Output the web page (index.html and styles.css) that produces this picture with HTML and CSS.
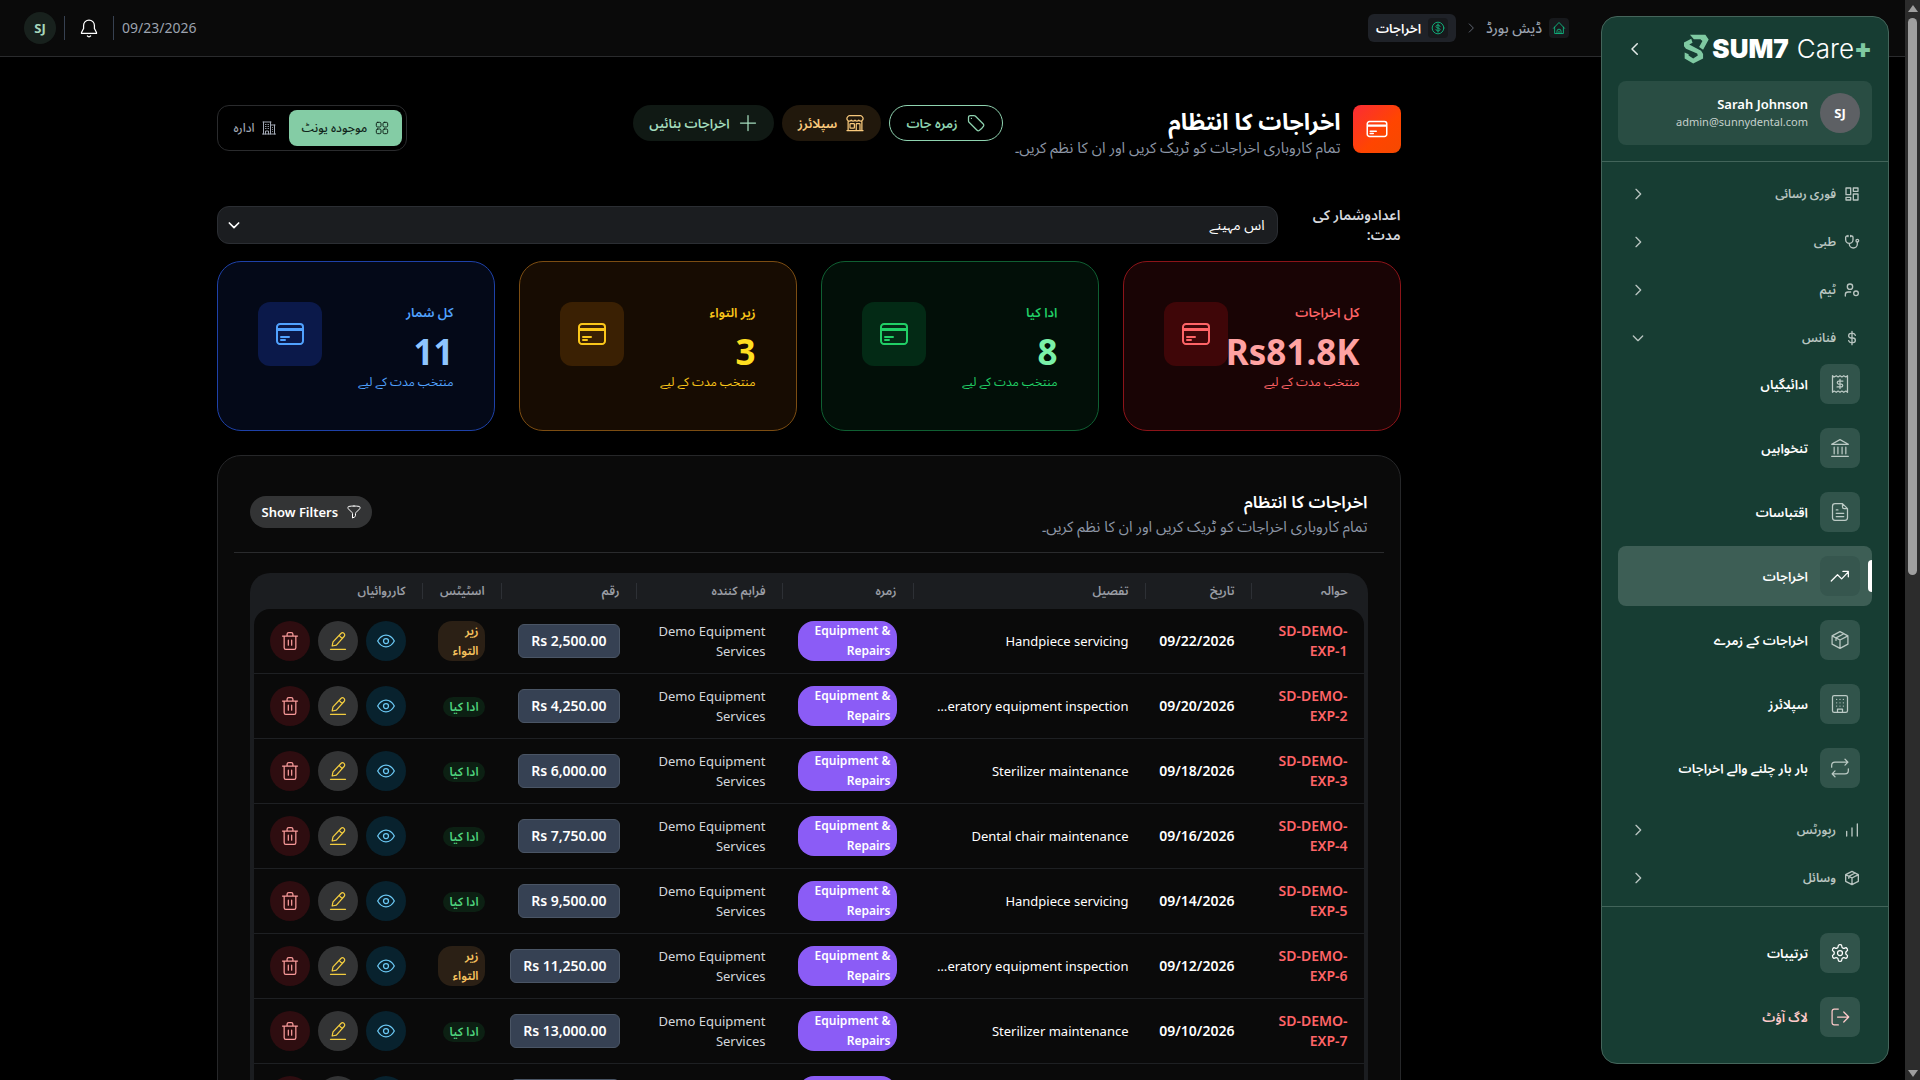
FILE: index.html
```html
<!DOCTYPE html>
<html lang="ur" dir="rtl">
<head>
    <meta charset="UTF-8">
    <meta name="viewport" content="width=device-width, initial-scale=1.0">
    <title>اخراجات کا انتظام</title>
    <link rel="stylesheet" href="styles.css">
</head>
<body>

    <!-- icon sprite -->
    <svg class="sprite" aria-hidden="true">
        <symbol id="i-card" viewBox="0 0 24 24"><path d="M2.25 8.25h19.5M2.25 9h19.5m-16.5 5.25h6m-6 2.25h3m-3.75 3h15a2.25 2.25 0 0 0 2.25-2.25V6.75A2.25 2.25 0 0 0 19.5 4.5h-15a2.25 2.25 0 0 0-2.25 2.25v10.5A2.25 2.25 0 0 0 4.5 19.5Z"/></symbol>
        <symbol id="i-home" viewBox="0 0 24 24"><path d="M2.5 12.5 12 2.5l9.5 10M4.5 10.5V21.5h15V10.5M8.5 21.5v-4a3.5 3.5 0 0 1 7 0v4M12 17.5v4"/></symbol>
        <symbol id="i-coin" viewBox="0 0 24 24"><circle cx="12" cy="12" r="10"/><path d="M15.500 9.500c0-1.400-1.500-2.500-3.500-2.500s-3.500 1-3.500 2.500 1.500 2.200 3.500 2.500 3.500 1 3.500 2.500-1.500 2.500-3.500 2.500-3.500-1.100-3.500-2.500M12 5v14"/></symbol>
        <symbol id="i-right" viewBox="0 0 24 24"><path d="m9 5 7 7-7 7"/></symbol>
        <symbol id="i-left" viewBox="0 0 24 24"><path d="m15 5-7 7 7 7"/></symbol>
        <symbol id="i-down" viewBox="0 0 24 24"><path d="m5 9 7 7 7-7"/></symbol>
        <symbol id="i-bell" viewBox="0 0 24 24"><path d="M12 2.500a6.500 6.500 0 0 0-6.500 6.500v3.500L3 17.500v1h18v-1l-2.500-5V9A6.500 6.500 0 0 0 12 2.500ZM10 21.500a2.500 2.500 0 0 0 4 0"/></symbol>
        <symbol id="i-tag" viewBox="0 0 24 24"><path d="M9.568 3H5.250A2.250 2.250 0 0 0 3 5.250v4.318c0 .597.237 1.170.659 1.591l9.581 9.581c.699.699 1.780.872 2.607.330a18.095 18.095 0 0 0 5.223-5.223c.542-.827.369-1.908-.330-2.607L11.160 3.660A2.250 2.250 0 0 0 9.568 3ZM6.500 6.500h.01"/></symbol>
        <symbol id="i-store" viewBox="0 0 24 24"><path d="M13.5 21v-7.5a.75.75 0 0 1 .75-.75h3a.75.75 0 0 1 .75.75V21m-4.5 0H2.36m11.14 0H18m0 0h3.64m-1.39 0V9.349M3.75 21V9.349m0 0a3.001 3.001 0 0 0 3.75-.615A2.993 2.993 0 0 0 9.75 9.75c.896 0 1.7-.393 2.25-1.016a2.993 2.993 0 0 0 2.25 1.016c.896 0 1.7-.393 2.25-1.015a3.001 3.001 0 0 0 3.75.614m-16.5 0a3.004 3.004 0 0 1-.621-4.72l1.189-1.19A1.5 1.5 0 0 1 5.378 3h13.243a1.5 1.5 0 0 1 1.06.44l1.19 1.189a3 3 0 0 1-.621 4.72M6.75 18h3.75a.75.75 0 0 0 .75-.75V13.5a.75.75 0 0 0-.75-.75H6.75a.75.75 0 0 0-.75.75v3.75c0 .414.336.75.75.75Z"/></symbol>
        <symbol id="i-plus" viewBox="0 0 24 24"><path d="M12 3v18M3 12h18"/></symbol>
        <symbol id="i-grid" viewBox="0 0 24 24"><rect x="3.5" y="3.5" width="7" height="7" rx="2"/><rect x="13.5" y="3.5" width="7" height="7" rx="2"/><rect x="3.5" y="13.5" width="7" height="7" rx="2"/><rect x="13.5" y="13.5" width="7" height="7" rx="2"/></symbol>
        <symbol id="i-office" viewBox="0 0 24 24"><path d="M2.25 21h19.5m-18-18v18m10.5-18v18m6-13.5V21M6.75 6.75h.75m-.75 3h.75m-.75 3h.75m3-6h.75m-.75 3h.75m-.75 3h.75M6.75 21v-4.500h4.500V21M3 3h12m-.75 4.5H21m-3.750 3.750h.01m-.01 3h.01m-.01 3h.01"/></symbol>
        <symbol id="i-funnel" viewBox="0 0 24 24"><path d="M12 3c2.755 0 5.455.232 8.083.678.533.09.917.556.917 1.096v1.044a2.25 2.25 0 0 1-.659 1.591l-5.432 5.432a2.25 2.25 0 0 0-.659 1.591v2.927a2.25 2.25 0 0 1-1.244 2.013L9.75 21v-6.568a2.25 2.25 0 0 0-.659-1.591L3.659 7.409A2.25 2.25 0 0 1 3 5.818V4.774c0-.54.384-1.006.917-1.096A48.32 48.32 0 0 1 12 3Z"/></symbol>
        <symbol id="i-eye" viewBox="0 0 24 24"><path d="M2 12c2.500-4.500 5.800-7 10-7s7.500 2.500 10 7c-2.500 4.500-5.800 7-10 7s-7.500-2.500-10-7Z"/><circle cx="12" cy="12" r="3"/></symbol>
        <symbol id="i-edit" viewBox="0 0 24 24"><path d="M3 22h18M5 18l1-5 9.500-10a2.600 2.600 0 0 1 3.800 3.600L10 17l-5 1ZM13.500 5.500l3.500 3.500"/></symbol>
        <symbol id="i-trash" viewBox="0 0 24 24"><path d="M3 6h18M5 6v14a2 2 0 0 0 2 2h10a2 2 0 0 0 2-2V6M8.500 6V4a2 2 0 0 1 2-2h3a2 2 0 0 1 2 2v2M10 11v6M14 11v6"/></symbol>
        <symbol id="i-dashboard" viewBox="0 0 24 24"><path d="M3 3h7v10H3ZM14 3h7v5h-7ZM14 12h7v9h-7ZM3 17h7v4H3Z"/></symbol>
        <symbol id="i-stetho" viewBox="0 0 24 24"><path d="M6 3H4.500a2 2 0 0 0-2 2v3.500a5.500 5.500 0 0 0 11 0V5a2 2 0 0 0-2-2H10M8 14v1a6 6 0 0 0 12 0v-3M6 2v2M10 2v2"/><circle cx="20" cy="10" r="2"/></symbol>
        <symbol id="i-team" viewBox="0 0 24 24"><circle cx="9" cy="7" r="4"/><path d="M2 21v-2a4 4 0 0 1 4-4h4"/><circle cx="18" cy="17" r="3.500"/></symbol>
        <symbol id="i-dollar" viewBox="0 0 24 24"><path d="M17 8a4 4 0 0 0-3.500-3h-3a3.500 3.500 0 0 0 0 7h3a3.500 3.500 0 0 1 0 7h-3A4 4 0 0 1 7 16M12 2v20"/></symbol>
        <symbol id="i-receipt" viewBox="0 0 24 24"><path d="M3 2v20l2-1.500L7.500 22l2.250-1.500L12 22l2.250-1.500L16.500 22l2.500-1.500 2 1.500V2l-2 1.500L16.500 2l-2.250 1.500L12 2 9.750 3.500 7.500 2 5 3.500ZM15.500 8.500h-5a1.750 1.750 0 0 0 0 3.500h3a1.750 1.750 0 0 1 0 3.500h-5M12 6.500v11"/></symbol>
        <symbol id="i-bank" viewBox="0 0 24 24"><path d="M2 22h20M2 7.500h20L12 2ZM5 11v8M9.500 11v8M14.500 11v8M19 11v8"/></symbol>
        <symbol id="i-file" viewBox="0 0 24 24"><path d="M15 2v4a2 2 0 0 0 2 2h4M18 22H6a3 3 0 0 1-3-3V5a3 3 0 0 1 3-3h9l6 6v11a3 3 0 0 1-3 3ZM7.500 9.500h2M7.500 13.500h9M7.500 17.500h9"/></symbol>
        <symbol id="i-trend" viewBox="0 0 24 24"><path d="m1.500 18 7.500-7.500 5 5L22 7M15.500 6.500H22V13"/></symbol>
        <symbol id="i-box" viewBox="0 0 24 24"><path d="m12 2 9.500 5v10L12 22l-9.500-5V7ZM12 12l9.500-5M12 12v10M12 12 2.500 7M16.700 4.500l-9.500 5v3"/></symbol>
        <symbol id="i-building" viewBox="0 0 24 24"><rect x="3" y="2" width="18" height="20" rx="2"/><path d="M9 22v-4h6v4M8 6.500h.01M12 6.500h.01M16 6.500h.01M8 10.500h.01M12 10.500h.01M16 10.500h.01M8 14.500h.01M12 14.500h.01M16 14.500h.01"/></symbol>
        <symbol id="i-repeat" viewBox="0 0 24 24"><path d="M2 11V9a4 4 0 0 1 4-4h15.500M18 1.500 21.500 5 18 8.500M22 13v2a4 4 0 0 1-4 4H2.500M6 22.500 2.500 19 6 15.500"/></symbol>
        <symbol id="i-bars" viewBox="0 0 24 24"><path d="M4 21v-7M12 21V9M20 21V3"/></symbol>
        <symbol id="i-gear" viewBox="0 0 24 24"><path d="M12.220 2h-.440a2 2 0 0 0-2 2v.180a2 2 0 0 1-1 1.730l-.430.250a2 2 0 0 1-2 0l-.150-.080a2 2 0 0 0-2.730.730l-.220.380a2 2 0 0 0 .730 2.730l.150.100a2 2 0 0 1 1 1.720v.510a2 2 0 0 1-1 1.740l-.150.090a2 2 0 0 0-.730 2.730l.220.380a2 2 0 0 0 2.730.730l.150-.080a2 2 0 0 1 2 0l.430.250a2 2 0 0 1 1 1.730V20a2 2 0 0 0 2 2h.440a2 2 0 0 0 2-2v-.180a2 2 0 0 1 1-1.730l.430-.250a2 2 0 0 1 2 0l.150.080a2 2 0 0 0 2.730-.730l.220-.390a2 2 0 0 0-.730-2.730l-.150-.080a2 2 0 0 1-1-1.740v-.500a2 2 0 0 1 1-1.740l.150-.090a2 2 0 0 0 .730-2.730l-.220-.380a2 2 0 0 0-2.730-.730l-.150.080a2 2 0 0 1-2 0l-.430-.250a2 2 0 0 1-1-1.730V4a2 2 0 0 0-2-2Z"/><circle cx="12" cy="12" r="3"/></symbol>
        <symbol id="i-logout" viewBox="0 0 24 24"><path d="M10 2.500H5a2.500 2.500 0 0 0-2.500 2.500v14A2.500 2.500 0 0 0 5 21.500h5M9 12h13M16.500 6l6 6-6 6"/></symbol>
    </svg>

    <header class="topbar">
        <nav class="crumbs">
            <a class="crumb" href="#"><span class="crumb-icon"><svg><use href="#i-home"/></svg></span>ڈیش بورڈ</a>
            <svg class="crumb-sep"><use href="#i-right"/></svg>
            <a class="crumb current" href="#"><span class="crumb-icon"><svg><use href="#i-coin"/></svg></span>اخراجات</a>
        </nav>
        <div class="topbar-end">
            <span class="date">09/23/2026</span>
            <button class="bell" aria-label="Notifications"><svg><use href="#i-bell"/></svg></button>
            <button class="user-chip">SJ</button>
        </div>
    </header>

    <aside class="sidebar">
        <div class="side-head">
            <div class="logo" dir="ltr">
                <svg class="logo-mark" viewBox="0 0 76 88"><path d="M18 1h47l10 14-17 31-12-8 10-18-6-6H30Z"/><path d="m0 24 22-11 4 12-10 5 36 19 6 10v14L28 88 2 73V55l12 5v4l14 9 14-9-2-6L6 43 0 36Z"/></svg>
                <span class="logo-bold">SUM7</span>
                <span class="logo-thin">Care</span><span class="logo-plus">+</span>
            </div>
            <button class="collapse" aria-label="Collapse"><svg><use href="#i-left"/></svg></button>
        </div>
        <div class="profile">
            <span class="avatar">SJ</span>
            <div>
                <div class="profile-name">Sarah Johnson</div>
                <div class="profile-mail">admin@sunnydental.com</div>
            </div>
        </div>

        <nav class="side-nav">
            <button class="group"><svg><use href="#i-dashboard"/></svg>فوری رسائی<svg class="arrow"><use href="#i-right"/></svg></button>
            <button class="group"><svg><use href="#i-stetho"/></svg>طبی<svg class="arrow"><use href="#i-right"/></svg></button>
            <button class="group"><svg><use href="#i-team"/></svg>ٹیم<svg class="arrow"><use href="#i-right"/></svg></button>
            <div class="group-open">
                <button class="group"><svg><use href="#i-dollar"/></svg>فنانس<svg class="arrow"><use href="#i-down"/></svg></button>
                <div class="items">
                    <a class="item" href="#"><span class="item-icon"><svg><use href="#i-receipt"/></svg></span>ادائیگیاں</a>
                    <a class="item" href="#"><span class="item-icon"><svg><use href="#i-bank"/></svg></span>تنخواہیں</a>
                    <a class="item" href="#"><span class="item-icon"><svg><use href="#i-file"/></svg></span>اقتباسات</a>
                    <a class="item active" href="#"><span class="item-icon"><svg><use href="#i-trend"/></svg></span>اخراجات</a>
                    <a class="item" href="#"><span class="item-icon"><svg><use href="#i-box"/></svg></span>اخراجات کے زمرے</a>
                    <a class="item" href="#"><span class="item-icon"><svg><use href="#i-building"/></svg></span>سپلائرز</a>
                    <a class="item" href="#"><span class="item-icon"><svg><use href="#i-repeat"/></svg></span>بار بار چلنے والے اخراجات</a>
                </div>
            </div>
            <button class="group"><svg><use href="#i-bars"/></svg>رپورٹس<svg class="arrow"><use href="#i-right"/></svg></button>
            <button class="group"><svg><use href="#i-box"/></svg>وسائل<svg class="arrow"><use href="#i-right"/></svg></button>
        </nav>

        <div class="side-foot items">
            <a class="item settings" href="#"><span class="item-icon"><svg><use href="#i-gear"/></svg></span>ترتیبات</a>
            <a class="item logout" href="#"><span class="item-icon"><svg><use href="#i-logout"/></svg></span>لاگ آؤٹ</a>
        </div>
    </aside>

    <main class="main">
        <div class="container">

            <div class="page-head">
                <span class="page-icon"><svg><use href="#i-card"/></svg></span>
                <div class="page-title">
                    <h1>اخراجات کا انتظام</h1>
                    <p>تمام کاروباری اخراجات کو ٹریک کریں اور ان کا نظم کریں۔</p>
                </div>
                <div class="actions">
                    <button class="pill outline"><svg><use href="#i-tag"/></svg>زمرہ جات</button>
                    <button class="pill amber"><svg><use href="#i-store"/></svg>سپلائرز</button>
                    <button class="pill green"><svg><use href="#i-plus"/></svg>اخراجات بنائیں</button>
                </div>
                <div class="switch">
                    <button class="on"><svg><use href="#i-grid"/></svg>موجودہ یونٹ</button>
                    <button><svg><use href="#i-office"/></svg>ادارہ</button>
                </div>
            </div>

            <div class="period">
                <label for="period">اعدادوشمار کی مدت:</label>
                <div class="select-wrap">
                    <select id="period"><option>اس مہینے</option></select>
                    <svg><use href="#i-down"/></svg>
                </div>
            </div>

            <div class="stats">
                <div class="stat red">
                    <div class="stat-text">
                        <div class="stat-label">کل اخراجات</div>
                        <div class="stat-value"><bdi>Rs81.8K</bdi></div>
                        <div class="stat-note">منتخب مدت کے لیے</div>
                    </div>
                    <span class="stat-icon"><svg><use href="#i-card"/></svg></span>
                </div>
                <div class="stat emerald">
                    <div class="stat-text">
                        <div class="stat-label">ادا کیا</div>
                        <div class="stat-value">8</div>
                        <div class="stat-note">منتخب مدت کے لیے</div>
                    </div>
                    <span class="stat-icon"><svg><use href="#i-card"/></svg></span>
                </div>
                <div class="stat yellow">
                    <div class="stat-text">
                        <div class="stat-label">زیر التواء</div>
                        <div class="stat-value">3</div>
                        <div class="stat-note">منتخب مدت کے لیے</div>
                    </div>
                    <span class="stat-icon"><svg><use href="#i-card"/></svg></span>
                </div>
                <div class="stat blue">
                    <div class="stat-text">
                        <div class="stat-label">کل شمار</div>
                        <div class="stat-value">11</div>
                        <div class="stat-note">منتخب مدت کے لیے</div>
                    </div>
                    <span class="stat-icon"><svg><use href="#i-card"/></svg></span>
                </div>
            </div>

            <section class="panel">
                <div class="panel-head">
                    <div>
                        <h2>اخراجات کا انتظام</h2>
                        <p>تمام کاروباری اخراجات کو ٹریک کریں اور ان کا نظم کریں۔</p>
                    </div>
                    <button class="filters"><svg><use href="#i-funnel"/></svg>Show Filters</button>
                </div>

                <div class="table-wrap">
                    <table>
                        <colgroup>
                            <col class="c-ref"><col class="c-date"><col><col class="c-cat"><col class="c-sup"><col class="c-amt"><col class="c-status"><col class="c-act">
                        </colgroup>
                        <thead>
                            <tr><th>حوالہ</th><th>تاریخ</th><th>تفصیل</th><th>زمرہ</th><th>فراہم کنندہ</th><th>رقم</th><th>اسٹیٹس</th><th>کارروائیاں</th></tr>
                        </thead>
                        <tbody>
                            <tr>
                                <td class="ref" dir="ltr">SD-DEMO-EXP-1</td><td class="day">09/22/2026</td><td><div class="desc">Handpiece servicing</div></td>
                                <td><span class="cat">Equipment &amp; Repairs</span></td><td class="sup">Demo Equipment Services</td><td><bdi class="amt">Rs 2,500.00</bdi></td>
                                <td><span class="status due">زیر التواء</span></td>
                                <td><div class="row-actions"><button class="view" aria-label="View"><svg><use href="#i-eye"/></svg></button><button class="edit" aria-label="Edit"><svg><use href="#i-edit"/></svg></button><button class="del" aria-label="Delete"><svg><use href="#i-trash"/></svg></button></div></td>
                            </tr>
                            <tr>
                                <td class="ref" dir="ltr">SD-DEMO-EXP-2</td><td class="day">09/20/2026</td><td><div class="desc">Operatory equipment inspection</div></td>
                                <td><span class="cat">Equipment &amp; Repairs</span></td><td class="sup">Demo Equipment Services</td><td><bdi class="amt">Rs 4,250.00</bdi></td>
                                <td><span class="status paid">ادا کیا</span></td>
                                <td><div class="row-actions"><button class="view" aria-label="View"><svg><use href="#i-eye"/></svg></button><button class="edit" aria-label="Edit"><svg><use href="#i-edit"/></svg></button><button class="del" aria-label="Delete"><svg><use href="#i-trash"/></svg></button></div></td>
                            </tr>
                            <tr>
                                <td class="ref" dir="ltr">SD-DEMO-EXP-3</td><td class="day">09/18/2026</td><td><div class="desc">Sterilizer maintenance</div></td>
                                <td><span class="cat">Equipment &amp; Repairs</span></td><td class="sup">Demo Equipment Services</td><td><bdi class="amt">Rs 6,000.00</bdi></td>
                                <td><span class="status paid">ادا کیا</span></td>
                                <td><div class="row-actions"><button class="view" aria-label="View"><svg><use href="#i-eye"/></svg></button><button class="edit" aria-label="Edit"><svg><use href="#i-edit"/></svg></button><button class="del" aria-label="Delete"><svg><use href="#i-trash"/></svg></button></div></td>
                            </tr>
                            <tr>
                                <td class="ref" dir="ltr">SD-DEMO-EXP-4</td><td class="day">09/16/2026</td><td><div class="desc">Dental chair maintenance</div></td>
                                <td><span class="cat">Equipment &amp; Repairs</span></td><td class="sup">Demo Equipment Services</td><td><bdi class="amt">Rs 7,750.00</bdi></td>
                                <td><span class="status paid">ادا کیا</span></td>
                                <td><div class="row-actions"><button class="view" aria-label="View"><svg><use href="#i-eye"/></svg></button><button class="edit" aria-label="Edit"><svg><use href="#i-edit"/></svg></button><button class="del" aria-label="Delete"><svg><use href="#i-trash"/></svg></button></div></td>
                            </tr>
                            <tr>
                                <td class="ref" dir="ltr">SD-DEMO-EXP-5</td><td class="day">09/14/2026</td><td><div class="desc">Handpiece servicing</div></td>
                                <td><span class="cat">Equipment &amp; Repairs</span></td><td class="sup">Demo Equipment Services</td><td><bdi class="amt">Rs 9,500.00</bdi></td>
                                <td><span class="status paid">ادا کیا</span></td>
                                <td><div class="row-actions"><button class="view" aria-label="View"><svg><use href="#i-eye"/></svg></button><button class="edit" aria-label="Edit"><svg><use href="#i-edit"/></svg></button><button class="del" aria-label="Delete"><svg><use href="#i-trash"/></svg></button></div></td>
                            </tr>
                            <tr>
                                <td class="ref" dir="ltr">SD-DEMO-EXP-6</td><td class="day">09/12/2026</td><td><div class="desc">Operatory equipment inspection</div></td>
                                <td><span class="cat">Equipment &amp; Repairs</span></td><td class="sup">Demo Equipment Services</td><td><bdi class="amt">Rs 11,250.00</bdi></td>
                                <td><span class="status due">زیر التواء</span></td>
                                <td><div class="row-actions"><button class="view" aria-label="View"><svg><use href="#i-eye"/></svg></button><button class="edit" aria-label="Edit"><svg><use href="#i-edit"/></svg></button><button class="del" aria-label="Delete"><svg><use href="#i-trash"/></svg></button></div></td>
                            </tr>
                            <tr>
                                <td class="ref" dir="ltr">SD-DEMO-EXP-7</td><td class="day">09/10/2026</td><td><div class="desc">Sterilizer maintenance</div></td>
                                <td><span class="cat">Equipment &amp; Repairs</span></td><td class="sup">Demo Equipment Services</td><td><bdi class="amt">Rs 13,000.00</bdi></td>
                                <td><span class="status paid">ادا کیا</span></td>
                                <td><div class="row-actions"><button class="view" aria-label="View"><svg><use href="#i-eye"/></svg></button><button class="edit" aria-label="Edit"><svg><use href="#i-edit"/></svg></button><button class="del" aria-label="Delete"><svg><use href="#i-trash"/></svg></button></div></td>
                            </tr>
                            <tr>
                                <td class="ref" dir="ltr">SD-DEMO-EXP-8</td><td class="day">09/08/2026</td><td><div class="desc">Dental chair maintenance</div></td>
                                <td><span class="cat">Equipment &amp; Repairs</span></td><td class="sup">Demo Equipment Services</td><td><bdi class="amt">Rs 14,750.00</bdi></td>
                                <td><span class="status paid">ادا کیا</span></td>
                                <td><div class="row-actions"><button class="view" aria-label="View"><svg><use href="#i-eye"/></svg></button><button class="edit" aria-label="Edit"><svg><use href="#i-edit"/></svg></button><button class="del" aria-label="Delete"><svg><use href="#i-trash"/></svg></button></div></td>
                            </tr>
                        </tbody>
                    </table>
                </div>
            </section>

        </div>
    </main>

    <div class="scrollbar" aria-hidden="true"><i class="up"></i><i class="thumb"></i><i class="dn"></i></div>

</body>
</html>
```
FILE: styles.css
```css
* {
    box-sizing: border-box;
}
html {
    background: #000;
    scrollbar-width: none;
}
body {
    margin: 0;
    padding-right: 15px;
    background: #000;
    color: #fff;
    font-family: "Noto Sans", "Noto Sans Arabic", "DejaVu Sans", sans-serif;
    font-size: 14px;
    line-height: 20px;
}
h1, h2, p {
    margin: 0;
}
a {
    color: inherit;
    text-decoration: none;
}
button, select {
    margin: 0;
    padding: 0;
    border: 0;
    background: none;
    color: inherit;
    font: inherit;
    cursor: pointer;
}
svg {
    flex: none;
    width: 20px;
    height: 20px;
    fill: none;
    stroke: currentColor;
    stroke-width: 1.5;
    stroke-linecap: round;
    stroke-linejoin: round;
}
.sprite {
    display: none;
}

/* top bar */
.topbar {
    display: flex;
    align-items: center;
    justify-content: space-between;
    height: 57px;
    padding: 0 336px 0 24px;
    background: #0a0a0a;
    border-bottom: 1px solid #2a2b2d;
}
.crumbs, .crumb, .topbar-end {
    display: flex;
    align-items: center;
}
.crumbs {
    gap: 8px;
}
.crumb {
    gap: 7px;
    color: #9ca3af;
    font-weight: 500;
}
.crumb-icon {
    display: grid;
    place-items: center;
    width: 20px;
    height: 20px;
    border-radius: 4px;
    background: #17191c;
    color: #10b981;
}
.crumb-icon svg {
    width: 14px;
    height: 14px;
}
.crumb-sep {
    width: 14px;
    height: 14px;
    color: #6b7280;
}
.crumb.current {
    padding: 4px 8px;
    border-radius: 6px;
    background: #1f2228;
    color: #fff;
    font-size: 13px;
    font-weight: 600;
}
.date {
    color: #9ca3af;
}
.bell {
    display: grid;
    place-items: center;
    width: 50px;
    height: 24px;
    margin-right: 8px;
    border: solid #374151;
    border-width: 0 1px;
}
.user-chip {
    width: 32px;
    height: 32px;
    margin-right: 8px;
    border-radius: 50%;
    background: #18211d;
    color: #a7d8bd;
    font-size: 13px;
    font-weight: 700;
}

/* sidebar */
.sidebar {
    position: fixed;
    top: 16px;
    right: 31px;
    bottom: 16px;
    width: 288px;
    overflow: hidden;
    border: 1px solid #45655b;
    border-radius: 16px;
    background: #173d33;
}
.side-head {
    display: flex;
    align-items: center;
    justify-content: space-between;
    height: 64px;
    padding: 0 16px 0 24px;
}
.logo {
    display: flex;
    align-items: center;
    font-family: Inter, sans-serif;
    font-size: 26px;
    line-height: 32px;
}
.logo-mark {
    width: 25px;
    height: 30px;
    margin-right: 3px;
    fill: #7fcaa2;
    stroke: none;
}
.logo-bold {
    margin-right: 8px;
    font-weight: 900;
}
.logo-thin {
    font-weight: 300;
}
.logo-plus {
    color: #7fcaa2;
    font-weight: 900;
}
.collapse {
    display: grid;
    color: #e3ebe8;
}
.collapse svg {
    stroke-width: 2;
    width: 18px;
    height: 18px;
}
.profile {
    display: flex;
    align-items: center;
    gap: 12px;
    height: 64px;
    margin: 0 16px 16px;
    padding: 0 12px;
    border-radius: 8px;
    background: #294d43;
}
.avatar {
    display: grid;
    place-items: center;
    width: 40px;
    height: 40px;
    border-radius: 50%;
    background: #5d6064;
    font-size: 13px;
    font-weight: 700;
}
.profile-name {
    font-size: 13px;
    line-height: 18px;
    font-weight: 600;
}
.profile-mail {
    color: #c5d0cc;
    font-size: 11px;
    line-height: 18px;
}
.side-nav {
    display: flex;
    flex-direction: column;
    gap: 16px;
    padding: 16px 16px 12px;
    border-top: 1px solid #42645a;
}
.group {
    display: flex;
    align-items: center;
    gap: 8px;
    width: 100%;
    height: 32px;
    padding: 0 12px;
    color: #b9c5c1;
    font-size: 12px;
    font-weight: 600;
}
.group svg {
    width: 16px;
    height: 16px;
    stroke-width: 2;
}
.group .arrow {
    margin-right: auto;
}
.items {
    display: flex;
    flex-direction: column;
    gap: 4px;
}
.item {
    position: relative;
    display: flex;
    align-items: center;
    gap: 12px;
    height: 60px;
    padding: 0 12px;
    border-radius: 8px;
    font-size: 13px;
    font-weight: 600;
}
.item-icon {
    display: grid;
    place-items: center;
    width: 40px;
    height: 40px;
    border-radius: 8px;
    background: #31544b;
    color: #bccac5;
}
.item-icon svg {
    width: 20px;
    height: 20px;
}
.item.active {
    background: #3d5e55;
}
.item.active .item-icon {
    background: #36564e;
    color: #fff;
}
.item.active::before {
    content: "";
    position: absolute;
    right: 0;
    width: 4px;
    height: 32px;
    border-radius: 4px 0 0 4px;
    background: #fff;
}
.side-foot {
    padding: 16px;
    border-top: 1px solid #42645a;
}
.settings .item-icon {
    color: #fff;
}
.logout, .logout .item-icon {
    color: #fecaca;
}

/* page */
.main {
    padding: 48px 24px;
    margin-right: 288px;
    min-height: 1990px;
}
.container {
    max-width: 1184px;
    margin: 0 auto;
}
.page-head {
    display: flex;
    align-items: flex-start;
    margin-bottom: 48px;
}
.page-icon {
    display: grid;
    place-items: center;
    width: 48px;
    height: 48px;
    margin-left: 12px;
    border-radius: 8px;
    background: linear-gradient(135deg, #fb2c36, #ff4500 60%, #f54900);
}
.page-icon svg {
    width: 24px;
    height: 24px;
}
h1 {
    font-size: 23px;
    line-height: 32px;
    font-weight: 700;
}
.page-title p, .panel-head p {
    color: #8d96a5;
    font-size: 15px;
}
.actions {
    display: flex;
    gap: 8px;
    margin-right: 12px;
}
.pill {
    display: flex;
    align-items: center;
    gap: 8px;
    height: 36px;
    padding: 0 16px;
    border-radius: 18px;
    font-size: 13px;
    font-weight: 600;
}
.outline {
    border: 1px solid #8fd3b0;
    color: #8fd3b0;
}
.amber {
    background: #21180c;
    color: #f9c97c;
}
.green {
    background: #101914;
    color: #a4dcbd;
}
.switch {
    display: flex;
    margin-right: auto;
    padding: 4px;
    border: 1px solid #2a2b2d;
    border-radius: 12px;
}
.switch button {
    display: flex;
    align-items: center;
    gap: 7px;
    height: 36px;
    padding: 0 12px;
    border-radius: 8px;
    color: #a1a7b3;
    font-size: 12px;
    font-weight: 500;
}
.switch svg {
    width: 16px;
    height: 16px;
}
.switch .on {
    background: #84cca5;
    color: #10241a;
}
.period {
    display: flex;
    align-items: center;
    gap: 16px;
    margin-bottom: 16px;
}
.period label {
    flex: 0 0 107px;
    color: #d4d7dc;
    font-weight: 600;
}
.select-wrap {
    position: relative;
    flex: 1;
}
.select-wrap select {
    display: block;
    width: 100%;
    height: 38px;
    padding: 0 12px;
    border: 1px solid #2b2e33;
    border-radius: 12px;
    background: #1b1d20;
    appearance: none;
}
.select-wrap svg {
    position: absolute;
    left: 9px;
    top: 11px;
    width: 16px;
    height: 16px;
    stroke-width: 2.5;
    pointer-events: none;
}

/* stat cards */
.stats {
    display: grid;
    grid-template-columns: repeat(4, minmax(0, 1fr));
    gap: 24px;
    margin-bottom: 24px;
}
.stat {
    display: flex;
    align-items: flex-start;
    justify-content: space-between;
    padding: 40px;
    border: 1px solid;
    border-radius: 24px;
}
.stat-text {
    flex: 1;
    min-width: 0;
    position: relative;
}
.stat-label {
    font-size: 13px;
    font-weight: 600;
}
.stat-value {
    margin: 10px 0 2px;
    font-size: 35px;
    line-height: 40px;
    font-weight: 700;
    white-space: nowrap;
}
.stat-note {
    font-size: 12px;
    line-height: 16px;
}
.stat-icon {
    display: grid;
    place-items: center;
    width: 64px;
    height: 64px;
    border-radius: 12px;
}
.stat-icon svg {
    width: 32px;
    height: 32px;
}
.red { background: #190405; border-color: #8c1419; color: #ff6467; }
.red .stat-value { color: #ffa2a2; }
.red .stat-icon { background: #3f0608; }
.emerald { background: #020f08; border-color: #0f5f32; color: #21cf66; }
.emerald .stat-value { color: #7bf1a8; }
.emerald .stat-icon { background: #032a15; }
.yellow { background: #170c02; border-color: #7c4d12; color: #fac61a; }
.yellow .stat-value { color: #ffdf20; }
.yellow .stat-icon { background: #3a2003; }
.blue { background: #040918; border-color: #1e41a8; color: #51a2ff; }
.blue .stat-value { color: #8ec5ff; }
.blue .stat-icon { background: #0b194a; }

/* expenses table */
.panel {
    padding: 16px;
    border: 1px solid #262729;
    border-radius: 24px;
    background: #0a0a0a;
}
.panel-head {
    display: flex;
    align-items: center;
    justify-content: space-between;
    padding: 16px;
    margin-bottom: 20px;
    border-bottom: 1px solid #2a2b2d;
}
h2 {
    font-size: 17px;
    line-height: 28px;
    font-weight: 600;
}
.filters {
    display: flex;
    align-items: center;
    gap: 8px;
    height: 32px;
    padding: 0 10px 0 12px;
    border-radius: 16px;
    background: #333435;
    font-size: 13px;
    font-weight: 600;
}
.filters svg {
    width: 16px;
    height: 16px;
}
.table-wrap {
    margin: 0 16px;
    padding: 0 4px 4px;
    border-radius: 20px;
    background: #1b1d20;
}
table {
    width: 100%;
    table-layout: fixed;
    border-collapse: separate;
    border-spacing: 0;
}
.c-ref { width: 113px; }
.c-date { width: 106px; }
.c-cat { width: 131px; }
.c-sup { width: 146px; }
.c-amt { width: 135px; }
.c-status { width: 79px; }
.c-act { width: 168px; }
th {
    position: relative;
    height: 36px;
    padding: 0 16px;
    color: #9a9da5;
    font-size: 12px;
    font-weight: 600;
    text-align: right;
}
th:not(:last-child)::after {
    content: "";
    position: absolute;
    left: 0;
    top: 10px;
    width: 1px;
    height: 16px;
    background: #2d3035;
}
td {
    height: 65px;
    padding: 12px 16px;
    border-bottom: 1px solid #1e2023;
    background: #0a0a0a;
    text-align: right;
}
tbody tr:first-child td:first-child {
    border-top-right-radius: 16px;
}
tbody tr:first-child td:last-child {
    border-top-left-radius: 16px;
}
.ref {
    color: #ff6467;
    font-weight: 600;
}
.day {
    padding-left: 0;
    font-weight: 600;
}
.desc {
    max-width: 198px;
    overflow: hidden;
    font-size: 13px;
    text-overflow: ellipsis;
    white-space: nowrap;
}
.sup {
    color: #d4d7dc;
    font-size: 13px;
}
.cat {
    display: block;
    padding: 0 6px;
    border-radius: 16px;
    background: #8b5cf6;
    font-size: 12px;
    font-weight: 600;
}
.amt {
    display: inline-block;
    padding: 6px 12px;
    border: 1px solid #4a5565;
    border-radius: 6px;
    background: #364153;
    font-weight: 600;
    white-space: nowrap;
}
td:has(.amt) {
    padding-left: 0;
}
.status {
    display: inline-block;
    padding: 0 6px;
    border-radius: 14px;
    font-size: 12px;
    font-weight: 600;
    vertical-align: middle;
}
.due {
    background: #2b2015;
    color: #f7c35f;
}
.paid {
    background: #0c2013;
    color: #4fd47e;
}
.row-actions {
    display: flex;
    gap: 8px;
}
.row-actions button {
    display: grid;
    place-items: center;
    width: 40px;
    height: 40px;
    border-radius: 50%;
}
.view { background: #08222e; color: #6cc9f5; }
.edit { background: #333435; color: #f3cd3f; }
.del { background: #2e0d10; color: #f99a9a; }

/* page scrollbar */
.scrollbar {
    position: fixed;
    top: 0;
    right: 0;
    bottom: 0;
    display: flex;
    flex-direction: column;
    align-items: center;
    width: 15px;
    padding: 5px 0 3px;
    background: #2c2c2c;
}
.thumb {
    flex: 0 0 52%;
    width: 9px;
    margin: 6px 0 auto;
    border-radius: 5px;
    background: #9f9f9f;
}
.up, .dn {
    border: solid transparent;
    border-width: 0 5px 7px;
    border-bottom-color: #9f9f9f;
}
.dn {
    border-width: 7px 5px 0;
    border-top-color: #9f9f9f;
}
```
